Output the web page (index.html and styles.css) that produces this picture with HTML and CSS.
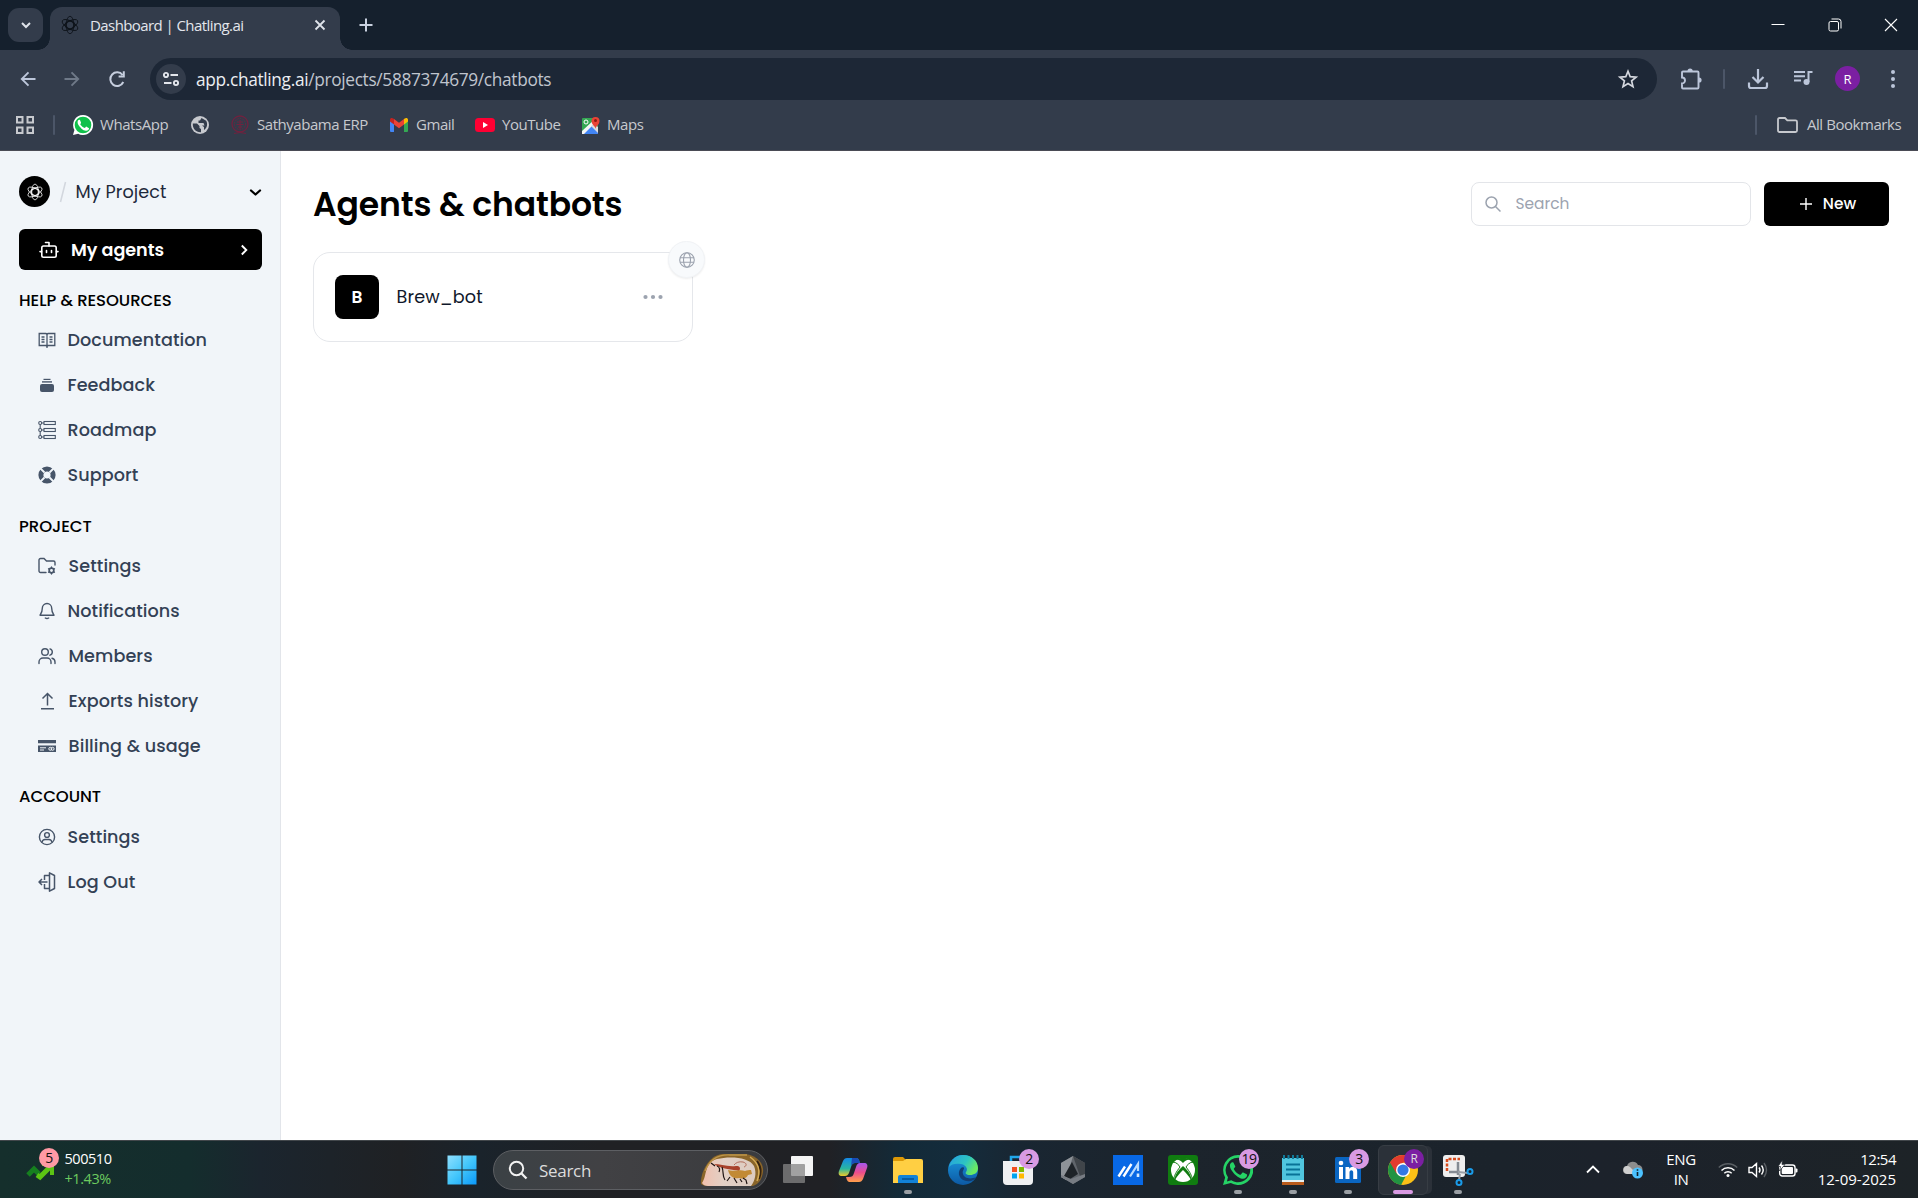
FILE: index.html
```html
<!DOCTYPE html>
<html lang="en">
<head>
<meta charset="utf-8">
<title>Dashboard | Chatling.ai</title>
<link rel="stylesheet" href="styles.css">
</head>
<body>
<svg class="defs" width="0" height="0">
  <defs>
    <symbol id="atom" viewBox="0 0 24 24"><g fill="none" stroke="currentColor"><circle cx="12" cy="12" r="5.600"/><circle cx="12" cy="12" r="4.600"/><ellipse cx="12" cy="12" rx="4.600" ry="10.500"/><ellipse cx="12" cy="12" rx="4.600" ry="10.500" transform="rotate(60 12 12)"/><ellipse cx="12" cy="12" rx="4.600" ry="10.500" transform="rotate(120 12 12)"/></g></symbol>
    <symbol id="whatsapp" viewBox="0 0 24 24"><path fill="currentColor" fill-rule="evenodd" d="M12 0a12 12 0 0 0-10.3 18L0 24l6.200-1.600A12 12 0 1 0 12 0zm0 2.200a9.800 9.800 0 1 1-5.400 18l-3.500.9.9-3.400A9.800 9.800 0 0 1 12 2.200z"/><path fill="currentColor" d="M8.500 6.300c-.3-.6-.6-.6-1-.6-.8 0-2 1-2 2.900 0 2 1.500 3.900 1.700 4.200.3.300 2.900 4.500 7.100 5.900 3 1 4.800-.7 5-2.700 0-.4-.1-.5-.4-.7l-2.700-1.300c-.4-.1-.6-.1-.9.300l-1 1.300c-.3.300-.5.300-.9.100-2-.9-3.700-2.400-4.700-4.300-.2-.4 0-.6.200-.8l.8-1.100c.2-.3.100-.5 0-.8z"/></symbol>
  </defs>
</svg>

<header class="browser">
  <div class="tabstrip">
    <button class="tab-search"><svg width="12" height="12" viewBox="0 0 12 12"><path d="M2 4l4 4 4-4" fill="none" stroke="currentColor" stroke-width="2"/></svg></button>
    <div class="tab">
      <svg class="favicon" width="20" height="20"><use href="#atom"/></svg>
      <span class="tab-title t">Dashboard | Chatling.ai</span>
      <svg width="12" height="12" viewBox="0 0 12 12"><path d="M1.500 1.500l9 9m0-9l-9 9" stroke="#dfe3ea" stroke-width="1.800"/></svg>
    </div>
    <svg class="new-tab" width="14" height="14" viewBox="0 0 14 14"><path d="M7 .5v13M.5 7h13" stroke="#c9d1e0" stroke-width="2"/></svg>
    <div class="window-buttons">
      <svg width="14" height="14" viewBox="0 0 14 14"><path d="M.5 6.500h13" stroke="#fff"/></svg>
      <svg width="14" height="14" viewBox="0 0 14 14" fill="none" stroke="#fff"><rect x="1" y="3.500" width="9.500" height="9.500" rx="1.500"/><path d="M3.500 1h7a2.500 2.500 0 0 1 2.500 2.500v7"/></svg>
      <svg width="14" height="14" viewBox="0 0 14 14"><path d="M1 1l12 12M13 1L1 13" stroke="#fff" stroke-width="1.100"/></svg>
    </div>
  </div>

  <div class="toolbar">
    <svg class="nav-back" width="16" height="16" viewBox="0 0 16 16" fill="none" stroke="#bcc6da" stroke-width="1.900"><path d="M15.500 8H2M8.500 1.300L1.800 8l6.700 6.700"/></svg>
    <svg class="nav-forward" width="16" height="16" viewBox="0 0 16 16" fill="none" stroke="#6f7988" stroke-width="1.900"><path d="M.5 8H14M7.500 1.300L14.200 8l-6.700 6.700"/></svg>
    <svg class="nav-reload" width="18" height="18" viewBox="0 0 18 18" fill="none" stroke="#c6cede" stroke-width="2"><path d="M15.300 12A6.800 6.800 0 1 1 14.500 5M15.800 1.300v5.200h-5.200"/></svg>
    <div class="omnibox">
      <span class="site-info"><svg width="18" height="16" viewBox="0 0 18 16" fill="none" stroke="#e3e6ec" stroke-width="1.900"><circle cx="4" cy="4" r="2.100"/><path d="M8.500 4H16M2 12h7.500"/><circle cx="14" cy="12" r="2.100"/></svg></span>
      <span class="url t"><span class="url-host">app.chatling.ai</span>/projects/5887374679/chatbots</span>
      <svg width="20" height="20" viewBox="0 0 20 20" fill="none" stroke="#d5d8df" stroke-width="1.700"><path d="M10 2.200l2.200 5.500 5.900.4-4.500 3.800 1.400 5.700-5-3.100-5 3.100 1.400-5.700L1.900 8.100l5.900-.4z"/></svg>
    </div>
    <svg class="extensions" width="22" height="22" viewBox="0 0 22 22"><path d="M3 3.500h14.500a1 1 0 0 1 1 1V19.500a1 1 0 0 1-1 1H3a1 1 0 0 1-1-1V15.500a3 3 0 0 0 0-6V4.500a1 1 0 0 1 1-1z" fill="none" stroke="#bcc6da" stroke-width="1.900"/><path d="M7.500 3a2.600 2.600 0 0 1 5.200 0zM19 9.400a2.600 2.600 0 0 1 0 5.200z" fill="#bcc6da"/></svg>
    <i class="sep"></i>
    <svg class="download" width="22" height="22" viewBox="0 0 22 22" fill="none" stroke="#bcc6da" stroke-width="2.200"><path d="M11 1v13M5.500 9l5.500 5.500L16.500 9M2 14.500V18a2 2 0 0 0 2 2h14a2 2 0 0 0 2-2v-3.500"/></svg>
    <svg class="media" width="20" height="18" viewBox="0 0 20 18"><path d="M1 3h11M1 7.300h11M1 11.500h7M15.500 13V3h4" fill="none" stroke="#bcc6da" stroke-width="2"/><circle cx="13.500" cy="13" r="3" fill="#bcc6da"/></svg>
    <span class="avatar">R</span>
    <svg class="menu" width="6" height="20" viewBox="0 0 6 20" fill="#bcc6da"><circle cx="3" cy="3" r="2"/><circle cx="3" cy="10" r="2"/><circle cx="3" cy="17" r="2"/></svg>
  </div>

  <div class="bookmarks">
    <svg class="apps" width="18" height="18" viewBox="0 0 18 18" fill="none" stroke="#c7c9ce" stroke-width="2"><rect x="1" y="1" width="5.500" height="5.500"/><rect x="11.500" y="1" width="5.500" height="5.500"/><rect x="1" y="11.500" width="5.500" height="5.500"/><rect x="11.500" y="11.500" width="5.500" height="5.500"/></svg>
    <i class="sep"></i>
    <a class="bm bm-wa"><svg width="20" height="20" viewBox="0 0 24 24"><path d="M12 0a12 12 0 0 0-10.300 18L0 24l6.200-1.600A12 12 0 1 0 12 0z" fill="#fff"/><circle cx="12" cy="12" r="10" fill="#10c14a"/><path fill="#fff" d="M8.500 6.300c-.3-.6-.6-.6-1-.6-.8 0-2 1-2 2.900 0 2 1.500 3.900 1.700 4.200.3.300 2.900 4.500 7.100 5.900 3 1 4.800-.7 5-2.700l-3.100-2c-.4-.1-.6-.1-.9.300l-1 1.300c-2-.6-4.300-2.400-5.600-4.200l1-2.100z"/></svg><span class="t">WhatsApp</span></a>
    <svg class="bm-globe" width="18" height="18" viewBox="0 0 18 18"><circle cx="9" cy="9" r="9" fill="#c7c9ce"/><path d="M1.800 7.500H6l2.500 2.500v2l1.500 1v3.200C5 16.500 1.500 13 1.800 7.500zM10.500 2l-1.500 2.500H7.500V7h5l1 2.500H11l2 1.500v3c3-1.500 4-6 2.200-9.200z" fill="#333c4b"/></svg>
    <a class="bm bm-erp"><svg width="18" height="20" viewBox="0 0 18 20" fill="none" stroke="#70223f"><circle cx="9" cy="9" r="8" stroke-width="1.300"/><circle cx="9" cy="9" r="5.500" stroke-dasharray="1.500 1"/><path d="M6 7h6M5.500 9.500h7M7 12h4M9 5v9M3 18.500q6-2 12 0"/></svg><span class="t">Sathyabama ERP</span></a>
    <a class="bm bm-gmail"><svg width="18" height="14" viewBox="0 0 18 14"><path d="M0 2.500V13a1 1 0 0 0 1 1h3V5z" fill="#4285f4"/><path d="M18 2.500V13a1 1 0 0 1-1 1h-3V5z" fill="#34a853"/><path d="M14 1v5.500l4-3V1.800C18 0 16 -.6 14.700.5z" fill="#fbbc04"/><path d="M4 1v5.500l5 3.800 5-3.800V1L9 4.800z" fill="#ea4335"/><path d="M0 1.800v1.700l4 3V1L3.300.5C2-.6 0 0 0 1.800z" fill="#c5221f"/></svg><span class="t">Gmail</span></a>
    <a class="bm bm-yt"><svg width="20" height="14" viewBox="0 0 20 14"><rect width="20" height="14" rx="3.500" fill="#ff0033"/><path d="M8 4l5 3-5 3z" fill="#fff"/></svg><span class="t">YouTube</span></a>
    <a class="bm bm-maps"><svg width="18" height="19" viewBox="0 0 18 19"><rect y="2" width="16" height="16" rx="1" fill="#34a853"/><path d="M0 18L9 9l7 7v2z" fill="#4285f4"/><path d="M0 15L14 2l2 2L2 18H0z" fill="#f5f5f5"/><path d="M9 10l7 7v-6l-4-3z" fill="#ddd"/><circle cx="4" cy="6" r="2" fill="none" stroke="#fff"/><path d="M13.500 13c0-3-4-4-4-8a4 4 0 0 1 8 0c0 4-4 5-4 8z" fill="#ea4335"/><circle cx="13.500" cy="4.500" r="1.500" fill="#8c1a12"/></svg><span class="t">Maps</span></a>
    <i class="sep sep-right"></i>
    <a class="bm bm-all"><svg width="21" height="16" viewBox="0 0 21 16" fill="none" stroke="#c7c9ce" stroke-width="1.800"><path d="M1 13.500v-11A1.500 1.500 0 0 1 2.500 1H8l2.300 2.300h8.200A1.500 1.500 0 0 1 20 4.800v8.700a1.500 1.500 0 0 1-1.500 1.500h-16A1.500 1.500 0 0 1 1 13.500z"/></svg><span class="t">All Bookmarks</span></a>
  </div>
</header>

<div class="app">
  <aside class="sidebar">
    <div class="project">
      <span class="logo"><svg width="18" height="18"><use href="#atom"/></svg></span>
      <svg class="slash" width="8" height="22" viewBox="0 0 8 22"><path d="M6.500 1L1.500 21" stroke="#d3d7de" stroke-width="1.500"/></svg>
      <span class="project-name t">My Project</span>
      <svg class="project-caret" width="13" height="8" viewBox="0 0 13 8"><path d="M2 1.500l4.500 4 4.500-4" fill="none" stroke="#000" stroke-width="2.300" stroke-linecap="round" stroke-linejoin="round"/></svg>
    </div>
    <a class="agents">
      <svg width="20" height="18" viewBox="0 0 20 18" fill="none" stroke="#fff" stroke-width="1.600" stroke-linecap="round" stroke-linejoin="round"><rect x="2.800" y="5" width="14.400" height="11.200" rx="1.700"/><path d="M10 5V1.500H6.500M1 10.600h1.500M17.500 10.600H19M7.500 9.500v2M12.500 9.500v2"/></svg>
      <span class="agents-label t">My agents</span>
      <svg width="8" height="12" viewBox="0 0 8 12"><path d="M1.800 1.500L6.300 6l-4.500 4.500" fill="none" stroke="#fff" stroke-width="1.900"/></svg>
    </a>

    <h2 class="section t sec-help">HELP &amp; RESOURCES</h2>
    <nav class="links">
      <a class="link"><svg width="18" height="18" viewBox="0 0 18 18" fill="none" stroke="currentColor" stroke-width="1.300"><path d="M1.200 2.500H8L9 3.500l1-1h6.800v12H10l-1 1-1-1H1.200zM9 3.500v13.500M3.500 6h3M3.500 8.500h3M3.500 11h3M11.500 6h3M11.500 8.500h3M11.500 11h3"/></svg><span class="t">Documentation</span></a>
      <a class="link"><svg width="18" height="18" viewBox="0 0 18 18" fill="currentColor"><rect x="2" y="8" width="14" height="8" rx="2"/><rect x="4" y="5.200" width="10" height="1.400"/><rect x="5.500" y="2.800" width="7" height="1.200"/></svg><span class="t">Feedback</span></a>
      <a class="link"><svg width="18" height="20" viewBox="0 0 18 20" fill="none" stroke="currentColor" stroke-width="1.100"><circle cx="2.200" cy="3" r="1.500"/><circle cx="2.200" cy="10" r="1.500"/><circle cx="2.200" cy="17" r="1.500"/><path d="M2.200 4.500v4M2.200 11.500v4M3.700 3H6M3.700 10H6M3.700 17H6"/><rect x="6" y="1.500" width="11.300" height="3"/><rect x="6" y="8.500" width="11.300" height="3"/><rect x="6" y="15.500" width="11.300" height="3"/></svg><span class="t">Roadmap</span></a>
      <a class="link"><svg width="18" height="18" viewBox="0 0 18 18"><circle cx="9" cy="9" r="6.100" fill="none" stroke="currentColor" stroke-width="5"/><path d="M2 2l4.500 4.500M16 2l-4.500 4.500M2 16l4.500-4.500M16 16l-4.500-4.500" stroke="#f1f5f9" stroke-width="1.800"/></svg><span class="t">Support</span></a>
    </nav>

    <h2 class="section t">PROJECT</h2>
    <nav class="links">
      <a class="link wide"><svg width="18" height="18" viewBox="0 0 18 18" fill="none" stroke="currentColor" stroke-width="1.400" stroke-linecap="round"><path d="M8 15.500H2.500A1.500 1.500 0 0 1 1 14V3A1.500 1.500 0 0 1 2.500 1.500H6L8.500 4h7A1.500 1.500 0 0 1 17 5.500V8"/><circle cx="13.500" cy="13.500" r="2.300" stroke-width="1.700"/><path d="M13.500 10v1M13.500 16v1M10.500 11.800l.8.500M15.700 14.700l.8.500M16.500 11.800l-.8.500M11.300 14.700l-.8.500" stroke-width="1.300"/></svg><span class="t">Settings</span></a>
      <a class="link"><svg width="18" height="18" viewBox="0 0 18 18" fill="none" stroke="currentColor" stroke-width="1.400" stroke-linecap="round" stroke-linejoin="round"><path d="M9 1.500a4.700 4.700 0 0 0-4.700 4.700c0 4-1.500 5.500-2.300 7h14c-.8-1.500-2.300-3-2.300-7A4.700 4.700 0 0 0 9 1.500zM7.300 16q1.700 1 3.400 0"/></svg><span class="t">Notifications</span></a>
      <a class="link wide"><svg width="18" height="18" viewBox="0 0 18 18" fill="none" stroke="currentColor" stroke-width="1.400" stroke-linecap="round"><circle cx="7" cy="5" r="3.300"/><path d="M1 16.500V15a4 4 0 0 1 4-4h4a4 4 0 0 1 4 4v1.500M12 1.900a3.300 3.300 0 0 1 0 6.300M14 11.200a4 4 0 0 1 3 3.800v1.500"/></svg><span class="t">Members</span></a>
      <a class="link wide"><svg width="18" height="18" viewBox="0 0 18 18" fill="none" stroke="currentColor" stroke-width="1.500"><path d="M9.500 13.500V2M4.500 6.500l5-5 5 5M3 16.800h13"/></svg><span class="t">Exports history</span></a>
      <a class="link wide"><svg width="18" height="14" viewBox="0 0 18 14"><path d="M0 1h18v3.300H0zM0 6.500h18V13H0z" fill="currentColor"/><path d="M2 8.800h6M2 11h4" stroke="#f1f5f9"/><g fill="none" stroke="#f1f5f9"><circle cx="12.300" cy="9.800" r="1.500"/><circle cx="14.600" cy="9.800" r="1.500"/></g></svg><span class="t">Billing &amp; usage</span></a>
    </nav>

    <h2 class="section sec-account t">ACCOUNT</h2>
    <nav class="links">
      <a class="link"><svg width="18" height="18" viewBox="0 0 18 18" fill="none" stroke="currentColor" stroke-width="1.400"><circle cx="9" cy="9" r="7.600"/><circle cx="9" cy="7" r="2.400"/><path d="M4 14.500c.3-2 1.500-3 3-3h4c1.500 0 2.700 1 3 3"/></svg><span class="t">Settings</span></a>
      <a class="link"><svg width="18" height="20" viewBox="0 0 18 20" fill="none" stroke="currentColor" stroke-width="1.500" stroke-linejoin="round"><path d="M11.500 .8V19.200l5-2.700V3.500zM11.500 3.500h-5V8M6.500 12v4.500h5M9.500 10H1M4 7l-3 3 3 3"/></svg><span class="t">Log Out</span></a>
    </nav>
  </aside>

  <main class="main">
    <div class="topbar">
      <h1 class="title t">Agents &amp; chatbots</h1>
      <div class="search"><svg width="16" height="16" viewBox="0 0 16 16" fill="none" stroke="#9ca3af" stroke-width="1.500"><circle cx="6.500" cy="6.500" r="5.500"/><path d="M10.500 10.500l5 5"/></svg><span class="t">Search</span></div>
      <button class="new"><svg width="12" height="12" viewBox="0 0 12 12"><path d="M6 0v12M0 6h12" stroke="#fff" stroke-width="1.400"/></svg><span class="t">New</span></button>
    </div>
    <article class="card">
      <span class="card-letter">B</span>
      <span class="card-name t">Brew_bot</span>
      <svg width="20" height="6" viewBox="0 0 20 6" fill="#9ca3af"><circle cx="2.500" cy="3" r="2.100"/><circle cx="10" cy="3" r="2.100"/><circle cx="17.500" cy="3" r="2.100"/></svg>
      <span class="card-globe"><svg width="16" height="16" viewBox="0 0 16 16" fill="none" stroke="#9ca3af" stroke-width="1.100"><circle cx="8" cy="8" r="7.300"/><ellipse cx="8" cy="8" rx="3.500" ry="7.300"/><path d="M1 5.700h14M1 10.300h14"/></svg></span>
    </article>
  </main>
</div>

<footer class="taskbar">
  <div class="stocks">
    <span class="stock-icon"><svg width="28" height="20" viewBox="0 0 28 20" fill="none" stroke-width="5"><path d="M2 15l6-6 5 5" stroke="#16801f"/><path d="M11 15l3 2L25 6" stroke="#5cc414"/><path d="M16 4h10v11" stroke="#5cc414" stroke-width="4"/></svg><b class="badge pink">5</b></span>
    <span class="stock-text"><span class="t">500510</span><span class="up t">+1.43%</span></span>
  </div>
  <svg class="start" width="30" height="30" viewBox="0 0 30 30"><defs><linearGradient id="win" x1="0" y1="0" x2="1" y2="1" gradientUnits="objectBoundingBox"><stop stop-color="#8fe0ff"/><stop offset=".5" stop-color="#43c6fb"/><stop offset="1" stop-color="#0a98f9"/></linearGradient></defs><path d="M.5.5h14v14H.5zM15.500.5h14v14h-14zM.5 15.500h14v14H.5zM15.500 15.500h14v14h-14z" fill="url(#win)"/></svg>
  <div class="task-search">
    <svg width="20" height="20" viewBox="0 0 20 20" fill="none" stroke="#f2f2f2" stroke-width="2"><circle cx="8.500" cy="8.500" r="6.700"/><path d="M13.300 13.300l5.200 5.200" stroke-width="2.300"/></svg>
    <span class="t">Search</span>
    <svg class="art" width="64" height="34" viewBox="0 0 64 34"><defs><linearGradient id="rock" x1="0" y1="0" x2="1" y2="0"><stop stop-color="#f0bfae"/><stop offset=".4" stop-color="#e3d0c5"/><stop offset="1" stop-color="#dccbc0"/></linearGradient></defs><path d="M1 31C0 20 9 2 22 1h24c12 2 18 10 17 18-1 7-4 12-10 14H9c-4 0-7-1-8-2z" fill="#8a6529"/><path d="M2 30C7 24 4 9 17 6c13-3 32-2 37 7 3 7 1 15-3 20H8c-3 0-5-1-6-3z" fill="url(#rock)"/><path d="M57 8q6 8 2 18" fill="none" stroke="#34220f" stroke-width="2"/><path d="M50 4q13 9 7 24" fill="none" stroke="#d5ab55" stroke-width="1.500"/><path d="M5 18Q12 1 30 2h17" fill="none" stroke="#bd9549" stroke-width="1.300"/><path d="M14 11c6 0 13 3 22 2 4 0 5 2 3 5-6-2-17-1-25-7z" fill="#a8422b"/><path d="M28 17c5 2 12-1 17 1 2-1 4-1 6-1l1 4-4 1c-2 4-5 4-9 3-4 1-9 0-11-8z" fill="#c28a35"/><path d="M11 10l4 3m2 0c3 1 3 4 2 6M22 14c2 5 0 9 3 13M30 24l-3 4M34 25l3 5M43 25l3 2 1 4M40 26l2 3" fill="none" stroke="#201412" stroke-width="1.200"/><path d="M34 12q3-4 9-3c4 1 4 4 1 5" fill="none" stroke="#b36f5c"/></svg>
  </div>
  <div class="pins">
    <span class="pin"><svg width="30" height="30" viewBox="0 0 30 30"><rect x="8" y="1" width="22" height="20" rx="1" fill="#f4f4f4"/><rect y="9" width="22" height="19" rx="1" fill="#858585" fill-opacity=".75"/></svg></span>
    <span class="pin"><svg width="30" height="30" viewBox="0 0 30 30"><defs><linearGradient id="cpa" x1="0" y1="0" x2="0" y2="1"><stop stop-color="#1488e8"/><stop offset=".6" stop-color="#29b7a0"/><stop offset="1" stop-color="#f0c928"/></linearGradient><linearGradient id="cpb" x1="0" y1="0" x2="0" y2="1"><stop stop-color="#a557ee"/><stop offset=".5" stop-color="#ec4c8c"/><stop offset="1" stop-color="#ffa04a"/></linearGradient></defs><path d="M9 3h9c2 0 3 1 4 5h-5c-2 0-3 1-4 4l-2 6c-1 2-2 3-4 3H4c-3 0-4-2-3-5L5 6c1-2 2-3 4-3z" fill="url(#cpa)"/><path d="M14 3h4c2 0 3 1 4 5h-5c-2 0-3 1-4 3z" fill="#194bb5"/><path d="M21 27h-9c-2 0-3-1-4-5h3c3 0 4-1 5-4l2-6c1-3 2-4 4-4h4c3 0 4 2 3 5l-4 11c-1 2-2 3-4 3z" fill="url(#cpb)"/></svg></span>
    <span class="pin open"><svg width="30" height="30" viewBox="0 0 30 30"><path d="M0 4q0-2 2-2h8l4 4H0z" fill="#dc9806"/><path d="M0 6h10l3-2h15q2 0 2 2v22H0z" fill="#ffcf43"/><path d="M5 28v-6q0-2 2-2h16q2 0 2 2v6z" fill="#1282d7"/><path d="M9 24h12" stroke="#064f92" stroke-width="1.500"/></svg></span>
    <span class="pin"><svg width="30" height="30" viewBox="0 0 30 30"><defs><linearGradient id="ea" x1="0" y1="0" x2="1" y2=".5"><stop stop-color="#259fe2"/><stop offset=".6" stop-color="#2dc4c2"/><stop offset="1" stop-color="#6bea62"/></linearGradient><linearGradient id="eb" x1="0" y1="0" x2="0" y2="1"><stop stop-color="#1c9be0"/><stop offset="1" stop-color="#0c59a4"/></linearGradient></defs><circle cx="15" cy="15" r="15" fill="url(#eb)"/><path d="M1 12C3 4 9 0 15 0c9 0 15 6 15 13 0 5-4 7-8 7s-5-2-4-3c2-2 1-7-5-8-5-1-10 0-12 3z" fill="url(#ea)"/><path d="M13 13c-5 5-1 15 10 13 3-1 4-2 5-4-6 3-12 1-13-3-1-3 1-4 1-6 0-1-2-1-3 0z" fill="#123e73"/></svg></span>
    <span class="pin"><svg width="30" height="30" viewBox="0 0 30 30"><path d="M8 7V2h12v5" fill="none" stroke="#20a6e9" stroke-width="2.500"/><path d="M0 6h30v20q0 4-4 4H4q-4 0-4-4z" fill="#eff0f2"/><path d="M9 12h5v5H9z" fill="#f25022"/><path d="M16 12h5v5h-5z" fill="#7fba00"/><path d="M9 18.500h5v5H9z" fill="#00a4ef"/><path d="M16 18.500h5v5h-5z" fill="#ffb900"/></svg><b class="badge">2</b></span>
    <span class="pin"><svg width="28" height="28" viewBox="0 0 28 28"><path d="M14 0l12 7v14l-12 7L2 21V7z" fill="#60656b"/><path d="M14 0L2 7v14l5 3z" fill="#8e9399"/><path d="M14 0l12 7v14l-4 2z" fill="#40454a"/><path d="M13 6L5 20l6 3 8-5z" fill="#1e2328"/><path d="M2 19l10 4 14-5v3l-12 7-12-7z" fill="#777c83"/></svg></span>
    <span class="pin"><svg width="30" height="30" viewBox="0 0 30 30"><path d="M0 0h30v30H0z" fill="#0868e5"/><path d="M5.500 21.500l6.500-10M10.500 21.500L18.500 9" stroke="#fff" stroke-width="2.400"/><path d="M17 21.500L25 9v7" fill="none" stroke="#b9dcff" stroke-width="2.200"/><path d="M25 18.500v3.500" stroke="#d5eaff" stroke-width="2.600"/></svg></span>
    <span class="pin"><svg width="30" height="30" viewBox="0 0 30 30"><rect width="30" height="30" rx="3" fill="#107c10"/><circle cx="15" cy="15" r="12" fill="#fff"/><path d="M7 5c4-1 6 1 8 3 2-2 4-4 8-3-3-3-13-3-16 0zM15 11c6 5 9 11 8 14-2-4-5-7-8-10-3 3-6 6-8 10-1-3 2-9 8-14z" fill="#107c10"/><path d="M5 7c3 0 6 3 7 5-4 5-6 9-6 12M25 7c-3 0-6 3-7 5 4 5 6 9 6 12" fill="none" stroke="#107c10" stroke-width="1"/></svg></span>
    <span class="pin open"><svg class="wa" width="30" height="30"><use href="#whatsapp"/></svg><b class="badge">19</b></span>
    <span class="pin open"><svg width="24" height="30" viewBox="0 0 24 30"><path d="M1 26h22v4H1z" fill="#b95b1c"/><path d="M1 3h22v23H1z" fill="#50c5de"/><path d="M1 25h22v2H1z" fill="#e8f1f3"/><path d="M3 0v4M7.500 0v4M12 0v4M16.500 0v4M21 0v4" stroke="#117b9b" stroke-width="2"/><path d="M5 9.500h14M5 14.500h14M5 19.500h14" stroke="#087297" stroke-width="1.800"/></svg></span>
    <span class="pin open"><svg width="26" height="26" viewBox="0 0 26 26" fill="#fff"><rect width="26" height="26" rx="1.500" fill="#0a66c2"/><path d="M4 10h4v12H4z"/><circle cx="6" cy="6" r="2.300"/><path d="M10.500 10h3.700v1.700c2-3 8-3 8 3V22h-4v-6.500c0-3-3.700-3-3.700 0V22h-4z"/></svg><b class="badge">3</b></span>
    <span class="pin active"><svg width="30" height="30" viewBox="0 0 30 30"><circle cx="15" cy="15" r="15" fill="#fbc116"/><path d="M15 15L2 7.500A15 15 0 0 0 13 29.900l6.500-12z" fill="#229342"/><path d="M28 7.500A15 15 0 0 0 2 7.500l6.500 11L15 7.500z" fill="#e33b2e"/><circle cx="15" cy="15" r="7" fill="#fff"/><circle cx="15" cy="15" r="5.600" fill="#3478e5"/></svg><b class="badge purple">R</b></span>
    <span class="pin open"><svg width="30" height="32" viewBox="0 0 30 32"><rect y="1" width="22" height="22" rx="3" fill="#eee"/><path d="M4 17V5h13" fill="none" stroke="#d84a1b" stroke-width="2.500" stroke-dasharray="3 1.500"/><path d="M15 8v13M6 18h11" stroke="#858b93" stroke-width="2.500"/><path d="M15 18l10 1M17 20l-1 6" stroke="#999fa6" stroke-width="2"/><circle cx="27" cy="17.500" r="2.500" fill="none" stroke="#1a9be8" stroke-width="2"/><circle cx="16" cy="28.500" r="2.500" fill="none" stroke="#1a9be8" stroke-width="2"/></svg></span>
  </div>
  <div class="tray">
    <svg class="tray-up" width="14" height="9" viewBox="0 0 14 9"><path d="M1 7.500l6-6 6 6" fill="none" stroke="#fff" stroke-width="1.800"/></svg>
    <svg class="cloud" width="20" height="18" viewBox="0 0 20 18"><path d="M4 13a4 4 0 0 1 0-8 6 6 0 0 1 11-1 4 4 0 0 1 0 9z" fill="#8d8d8d"/><path d="M4 13a4 4 0 1 1 3-7l5 5v2z" fill="#cfcfcf"/><circle cx="14.500" cy="12" r="5.500" fill="#4cc2ff"/><path d="M14.500 11v4M14.500 8.300v1.400" stroke="#10222d" stroke-width="1.600"/></svg>
    <span class="lang"><span class="t">ENG</span><span class="t">IN</span></span>
    <svg class="wifi" width="20" height="16" viewBox="0 0 20 16" fill="none" stroke="#fff" stroke-width="1.500"><path d="M.8 5.500a13 13 0 0 1 18.400 0" stroke="#5a5f64"/><path d="M3.500 8.500a9.200 9.200 0 0 1 13 0M6.300 11.300a5.200 5.200 0 0 1 7.400 0"/><circle cx="10" cy="13.500" r="1.500" fill="#fff" stroke="none"/></svg>
    <svg class="volume" width="20" height="18" viewBox="0 0 20 18" fill="none" stroke="#fff" stroke-width="1.400"><path d="M1 6.500v5h3l4.500 4V2.500L4 6.500zM11 6.500q2 2.500 0 5M13.500 4.500q3.500 4.500 0 9"/><path d="M16 2q5 7 0 14" stroke="#5a5f64"/></svg>
    <svg class="battery" width="20" height="18" viewBox="0 0 20 18"><rect x="1.700" y="4" width="15.300" height="11" rx="2.500" fill="none" stroke="#fff" stroke-width="1.400"/><rect x="3.700" y="6" width="11.300" height="7" rx="1" fill="#fff"/><path d="M17.500 7.500h1q1 0 1 1v2q0 1-1 1h-1z" fill="#fff"/><path d="M4.500-1L0 5.500h2.500L1.500 10 7 3.500H4z" fill="#fff" stroke="#1d2329" stroke-width=".7"/></svg>
    <span class="clock"><span class="time t">12:54</span><span class="t">12-09-2025</span></span>
  </div>
</footer>
</body>
</html>
```
FILE: styles.css
```css
* { box-sizing: border-box; }
body { margin: 0; width: 1918px; height: 1198px; overflow: hidden; display: flex; flex-direction: column; font-family: Poppins, Inter, "Noto Sans", sans-serif; color: #000; }
svg { display: block; flex: none; overflow: visible; }
button { border: 0; padding: 0; font: inherit; }
h1, h2 { margin: 0; }
.t { white-space: nowrap; }
.defs { position: absolute; }

/* Browser chrome */
.browser { height: 151px; flex: none; background: #333c4b; border-bottom: 1px solid #4a4b55; font-family: "Segoe UI", "Open Sans", sans-serif; color: #c7c9ce; }
.tabstrip { height: 50px; background: #15202d; display: flex; align-items: center; padding-left: 8px; }
.tab-search { width: 35px; height: 34px; border-radius: 11px; background: #333c4b; color: #dfe3ea; display: grid; place-items: center; }
.tab { position: relative; width: 290px; height: 43px; margin: 7px 0 0 7px; padding: 0 14px 7px 10px; display: flex; align-items: center; background: #333c4b; border-radius: 12px 12px 0 0; }
.tab::before, .tab::after { content: ""; position: absolute; bottom: 0; width: 12px; height: 12px; }
.tab::before { left: -12px; background: radial-gradient(circle at 0 0, transparent 11.500px, #333c4b 12px); }
.tab::after { right: -12px; background: radial-gradient(circle at 100% 0, transparent 11.500px, #333c4b 12px); }
.favicon { color: #0c1118; }
.tab-title { flex: 1; margin-left: 10px; font-size: 15px; color: #e3e6ec; letter-spacing: -.580px; }
.new-tab { margin-left: 19px; }
.window-buttons { margin-left: auto; display: flex; gap: 42.500px; padding-right: 20px; }
.toolbar { height: 57px; display: flex; align-items: center; }
.nav-back { margin-left: 20px; }
.nav-forward { margin-left: 28px; }
.nav-reload { margin-left: 28px; }
.omnibox { width: 1507px; height: 42px; margin-left: 24px; padding: 0 19px 0 6px; border-radius: 21px; background: #1d2736; display: flex; align-items: center; }
.site-info { width: 30px; height: 30px; border-radius: 15px; background: #333c4b; display: grid; place-items: center; }
.url { flex: 1; margin: 2px 0 0 10px; font-size: 17.300px; letter-spacing: -.330px; color: #c0c5ce; }
.url-host { color: #eceef2; }
.extensions { margin-left: 23px; }
.sep { width: 2px; height: 20px; border-radius: 1px; background: #4c5668; }
.toolbar .sep { margin-left: 21px; }
.download { margin-left: 22px; }
.media { margin: -2px 0 0 24px; }
.avatar { width: 25px; height: 25px; margin-left: 22px; border-radius: 50%; background: #7b1fa2; color: #fff; font-size: 13px; display: grid; place-items: center; }
.menu { margin-left: 30px; }
.bookmarks { height: 36px; display: flex; align-items: center; padding-left: 16px; font-size: 15px; letter-spacing: -.450px; }
.bookmarks > .sep { margin-left: 19px; }
.bm { display: flex; align-items: center; gap: 8px; }
.bm .t { margin-top: -2px; }
.bm-wa { margin-left: 18px; width: 96px; gap: 7px; }
.bm-globe { margin-left: 22px; }
.bm-erp { margin-left: 22px; width: 138px; }
.bm-gmail { margin-left: 21px; width: 64px; }
.bm-yt { margin-left: 21px; width: 86px; gap: 7px; }
.bm-maps { margin-left: 21px; width: 64px; gap: 7px; }
.bookmarks > .sep-right { margin-left: auto; }
.bm-all { margin: 0 15px 0 20px; gap: 9px; width: 126px; }

/* App */
.app { height: 989px; flex: none; display: flex; }
.sidebar { width: 281px; background: #f1f5f9; border-right: 1px solid #e2e5ea; padding: 20px 18px 0 19px; }
.project { height: 41px; display: flex; align-items: center; }
.project-caret { margin-top: 2px; }
.logo { width: 31px; height: 31px; border-radius: 50%; background: #000; color: #fff; display: grid; place-items: center; }
.slash { margin-left: 9px; }
.project-name { flex: 1; margin-left: 8.500px; font-size: 17.600px; letter-spacing: .1px; color: #1e293b; }
.agents { height: 41px; margin-top: 17px; padding: 0 14px 0 20px; border-radius: 6px; background: #000; color: #fff; display: flex; align-items: center; font-size: 17.600px; font-weight: 600; }
.agents-label { flex: 1; margin-left: 12px; letter-spacing: -.050px; }
.section { margin-top: 16px; height: 24px; line-height: 26px; font-size: 16.500px; font-weight: 500; letter-spacing: -.060px; }
.sec-help { margin-top: 18px; }
.sec-account { line-height: 24px; }
.links { margin-top: 6px; padding-left: 18.500px; color: #475569; }
.link { height: 45px; display: flex; align-items: center; gap: 12px; }
.link.wide { gap: 13px; }
.link span { margin-top: -2px; color: #334155; font-size: 17.600px; font-weight: 500; letter-spacing: .080px; }
.link svg { margin-top: -1px; }
.main { flex: 1; padding: 31px 29px 0 32px; }
.topbar { height: 44px; display: flex; align-items: center; }
.title { flex: 1; margin-top: 2px; font-size: 33px; font-weight: 600; letter-spacing: -.120px; }
.search { width: 280px; height: 44px; margin-right: 1px; border: 1px solid #e3e5e9; border-radius: 8px; padding: 0 0 1px 13px; display: flex; align-items: center; gap: 14.500px; color: #9ca3af; font-size: 15.400px; }
.new { width: 125px; height: 44px; margin-left: 12px; padding: 0 0 1px 3px; border-radius: 6px; background: #000; color: #fff; display: flex; align-items: center; justify-content: center; gap: 11px; font-size: 15.400px; font-weight: 500; }
.card { position: relative; width: 380px; height: 90px; margin-top: 26px; padding: 0 29px 0 21px; border: 1px solid #e5e7eb; border-radius: 17px; display: flex; align-items: center; }
.card-letter { width: 44px; height: 44px; border-radius: 8px; background: #000; color: #fff; font-size: 17px; font-weight: 600; display: grid; place-items: center; }
.card-name { flex: 1; margin-left: 17.500px; font-size: 17.600px; letter-spacing: .150px; color: #0f172a; }
.card-globe { position: absolute; right: -13px; top: -12px; width: 37px; height: 37px; border-radius: 50%; background: #f8fafc; border: 1px solid #f1f3f6; box-shadow: 0 1px 2px rgba(0,0,0,.07); display: grid; place-items: center; }

/* Taskbar */
.taskbar { height: 58px; flex: none; display: flex; align-items: center; border-top: 1px solid #42474b; background: linear-gradient(90deg, #152f2c 0, #142d2d 190px, #1b252e 260px, #1f2124 400px, #1a232b 480px, #202124 600px, #202125 830px, #132a38 900px, #142c3c 960px, #192632 1020px, #1c242c 1150px, #1b232b 1500px, #1c222b 1600px, #1d2327 1918px); font-family: "Segoe UI", "Open Sans", sans-serif; color: #fff; font-size: 15px; }
.stocks { width: 447px; padding-left: 26px; display: flex; }
.stock-icon { position: relative; width: 38.500px; padding-top: 10px; }
.badge { position: absolute; width: 20px; height: 20px; border-radius: 50%; background: #d99ae3; color: #111; font-size: 14px; font-weight: 400; line-height: 20px; text-align: center; letter-spacing: -.5px; }
.badge.pink { left: 13px; top: -2px; background: #ff99a4; }
.stock-text, .lang, .clock { display: flex; flex-direction: column; line-height: 20px; margin-top: -1px; }
.stock-text { font-size: 14.500px; letter-spacing: -.450px; }
.up { color: #6ccb5f; }
.task-search { width: 275px; height: 40px; margin-left: 16px; padding: 0 3px 0 14px; border: 1px solid #5d5f63; border-radius: 20px; background: linear-gradient(90deg, #3b4145, #414144 40%, #3a3b3e); display: flex; align-items: center; font-size: 17px; color: #dcdcdc; }
.task-search .t { flex: 1; margin: 1px 0 0 11px; letter-spacing: -.3px; }
.pins { display: flex; margin-left: 5px; gap: 5px; }
.pin { position: relative; width: 50px; height: 50px; border-radius: 6px; display: grid; place-items: center; }
.pin.open::after, .pin.active::after { content: ""; position: absolute; left: 21px; bottom: 1px; width: 8px; height: 4px; border-radius: 2px; background: #9a9fa4; }
.pin.active { background: #2b3139; border: 1px solid #373d44; box-shadow: 5px 0 0 -1px #2b3139; }
.pin.active::after { left: 14px; bottom: 0; width: 20px; background: #d99ae3; }
.pin .badge { left: 26px; top: 4px; }
.pin .badge.purple { left: 25px; top: 3px; background: #7b1fa2; color: #ddd; font-size: 12px; }
.wa { color: #25d366; }
.tray { margin-left: auto; display: flex; align-items: center; padding-right: 22px; }
.cloud { margin-left: 23px; }
.lang { width: 40px; margin-left: 18px; align-items: center; letter-spacing: -.4px; }
.wifi { margin-left: 17px; }
.volume { margin-left: 10px; }
.battery { margin-left: 10px; }
.clock { width: 88px; margin-left: 10px; align-items: flex-end; }
.time { letter-spacing: -.5px; }
```
